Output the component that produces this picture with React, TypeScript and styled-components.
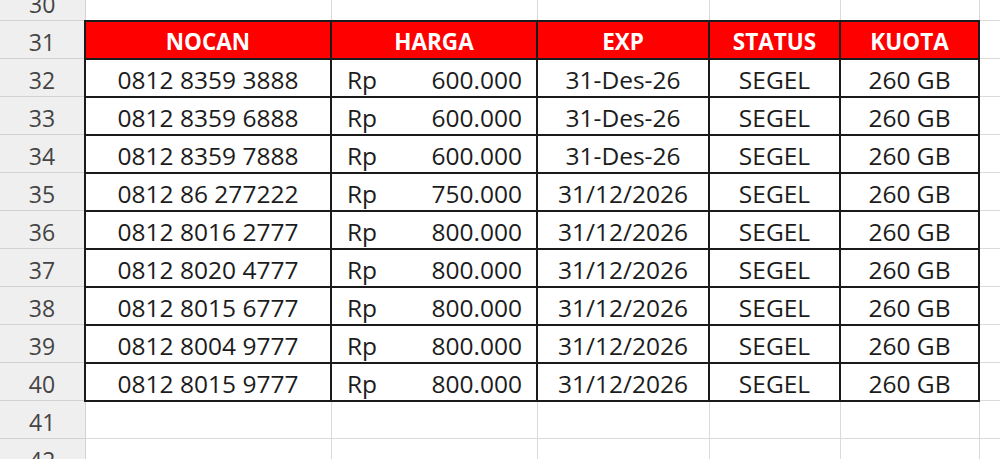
import styled, { createGlobalStyle } from 'styled-components';

const GlobalStyle = createGlobalStyle`
    html, body {
        margin: 0;
        padding: 0;
        background: #ffffff;
        overflow: hidden;
    }
    body {
        font-family: "Open Sans", "Noto Sans", sans-serif;
    }
`;

// the sheet is scrolled so row 30 is half hidden at the top
const Sheet = styled.div`
    width: 1000px;
    height: 459px;
    overflow: hidden;
`;

const Grid = styled.table`
    margin-top: -18px;
    border-collapse: collapse;
    border-spacing: 0;
    table-layout: fixed;
    width: 1040px;
`;

const Row = styled.tr`
    height: 38px;
`;

const RowHead = styled.td`
    padding: 4px 0 0;
    line-height: 26px;
    background-color: #efefef;
    border: 1px solid #d2d2d2;
    border-left: none;
    color: #444444;
    font-size: 23px;
    text-align: center;
    vertical-align: middle;
`;

const Blank = styled.td`
    border: 1px solid #dadada;
    padding: 0;
`;

const HeadCell = styled.td`
    background-color: #ff0000;
    color: #ffffff;
    font-weight: 700;
    font-size: 22.5px;
    line-height: 26px;
    text-align: center;
    vertical-align: middle;
    padding: 4px 0 0;
    border: 2px solid #1a1a1a;
`;

const Cell = styled.td<{ $align?: 'center' | 'left' }>`
    color: #1c1c1c;
    font-size: 24.5px;
    line-height: 26px;
    text-align: ${(p) => p.$align ?? 'center'};
    vertical-align: middle;
    padding: 5px 0 0;
    border: 2px solid #1a1a1a;
    white-space: nowrap;
`;

const Price = styled.div`
    display: flex;
    justify-content: space-between;
    padding: 0 14px 0 15px;
`;

interface Nomor {
    nocan: string;
    harga: string;
    exp: string;
}

const rows: Nomor[] = [
    { nocan: '0812 8359 3888', harga: '600.000', exp: '31-Des-26' },
    { nocan: '0812 8359 6888', harga: '600.000', exp: '31-Des-26' },
    { nocan: '0812 8359 7888', harga: '600.000', exp: '31-Des-26' },
    { nocan: '0812 86 277222', harga: '750.000', exp: '31/12/2026' },
    { nocan: '0812 8016 2777', harga: '800.000', exp: '31/12/2026' },
    { nocan: '0812 8020 4777', harga: '800.000', exp: '31/12/2026' },
    { nocan: '0812 8015 6777', harga: '800.000', exp: '31/12/2026' },
    { nocan: '0812 8004 9777', harga: '800.000', exp: '31/12/2026' },
    { nocan: '0812 8015 9777', harga: '800.000', exp: '31/12/2026' },
];

const widths = [85, 246, 206, 172, 131, 139, 61];

const App = () => {
    return (
        <Sheet>
            <GlobalStyle />
            <Grid>
                <colgroup>
                    {widths.map((w, i) => (
                        <col key={i} style={{ width: w }} />
                    ))}
                </colgroup>
                <tbody>
                    <Row>
                        <RowHead>30</RowHead>
                        <Blank />
                        <Blank />
                        <Blank />
                        <Blank />
                        <Blank />
                        <Blank />
                    </Row>
                    <Row>
                        <RowHead>31</RowHead>
                        <HeadCell>NOCAN</HeadCell>
                        <HeadCell>HARGA</HeadCell>
                        <HeadCell>EXP</HeadCell>
                        <HeadCell>STATUS</HeadCell>
                        <HeadCell>KUOTA</HeadCell>
                        <Blank />
                    </Row>
                    {rows.map((r, i) => (
                        <Row key={r.nocan}>
                            <RowHead>{32 + i}</RowHead>
                            <Cell>{r.nocan}</Cell>
                            <Cell $align="left">
                                <Price>
                                    <span>Rp</span>
                                    <span>{r.harga}</span>
                                </Price>
                            </Cell>
                            <Cell>{r.exp}</Cell>
                            <Cell>SEGEL</Cell>
                            <Cell>260 GB</Cell>
                            <Blank />
                        </Row>
                    ))}
                    {[41, 42].map((n) => (
                        <Row key={n}>
                            <RowHead>{n}</RowHead>
                            <Blank />
                            <Blank />
                            <Blank />
                            <Blank />
                            <Blank />
                            <Blank />
                        </Row>
                    ))}
                </tbody>
            </Grid>
        </Sheet>
    );
};

export default App;
